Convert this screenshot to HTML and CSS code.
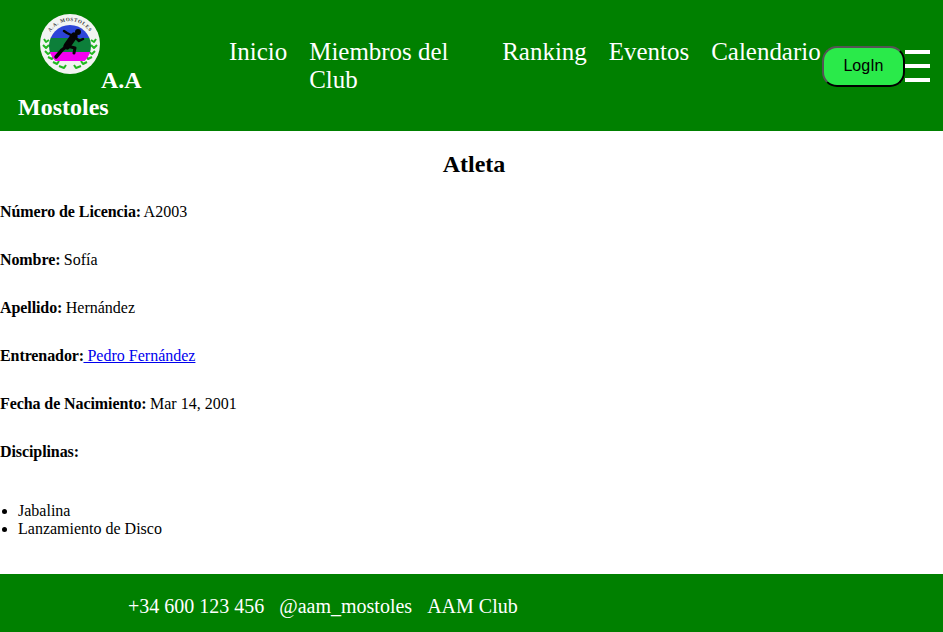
FILE: index.html
```html
<!DOCTYPE html>
<html lang="es">
  <head>
    <meta charset="UTF-8" />
    <meta name="viewport" content="width=device-width, initial-scale=1.0" />
    <title>Atleta</title>
    <link rel="stylesheet" href="styles.css">
  </head>
  <body>
    <header class="topbar">
      <a class="brand" href="#">
        <svg class="brand-logo" viewBox="0 0 60 60" width="60" height="60" aria-hidden="true">
          <circle cx="30" cy="30" r="30" fill="#f2f4f2" />
          <g fill="none" stroke="#22b822" stroke-width="2" stroke-linejoin="round">
            <path d="M4 25l2 3 3-2M3 31l3 3 3-3M5 37l3 3 3-2M8 43l4 2 2-3M13 48l4 2 2-3M19 52l5 2 2-3" />
            <path d="M56 25l-2 3-3-2M57 31l-3 3-3-3M55 37l-3 3-3-2M52 43l-4 2-2-3M47 48l-4 2-2-3M41 52l-5 2-2-3" />
          </g>
          <clipPath id="disc"><circle cx="30" cy="32" r="21" /></clipPath>
          <g clip-path="url(#disc)">
            <rect x="0" y="11" width="60" height="13" fill="#2d45d8" />
            <rect x="0" y="24" width="60" height="14" fill="#0c7f3a" />
            <rect x="0" y="38" width="60" height="9" fill="#f400f0" />
          </g>
          <g fill="none" stroke="#050505" stroke-linecap="round" stroke-linejoin="round">
            <path d="M34 22l-7 10" stroke-width="7" />
            <path d="M27 32l-5 4-6 7" stroke-width="3.5" />
            <path d="M27 32l8 2-1 5" stroke-width="3" />
            <path d="M33 22l-6-3-3-2" stroke-width="2.5" />
            <path d="M35 23l4 4 4-2" stroke-width="2.5" />
          </g>
          <circle cx="38" cy="18" r="3" fill="#050505" />
          <path id="rim" d="M7 30a23 23 0 0 1 46 0" fill="none" />
          <text class="brand-rim"><textPath href="#rim" startOffset="50%" text-anchor="middle">A.A. MOSTOLES</textPath></text>
        </svg>A.A Mostoles
      </a>
      <nav class="menu">
        <a class="menu-link" href="#">Inicio</a>
        <a class="menu-link menu-link-wide" href="#">Miembros del Club</a>
        <a class="menu-link" href="#">Ranking</a>
        <a class="menu-link" href="#">Eventos</a>
        <a class="menu-link" href="#">Calendario</a>
      </nav>
      <button class="login" type="button">LogIn</button>
      <div class="burger">
        <span class="burger-bar"></span>
        <span class="burger-bar"></span>
        <span class="burger-bar"></span>
      </div>
    </header>
    <main class="content">
      <h1 class="title">Atleta</h1>
      <p class="field"><strong>Número de Licencia:</strong> A2003</p>
      <p class="field"><strong>Nombre:</strong> Sofía</p>
      <p class="field"><strong>Apellido:</strong> Hernández</p>
      <p class="field"><strong>Entrenador:</strong><a href="#"> Pedro Fernández</a></p>
      <p class="field"><strong>Fecha de Nacimiento:</strong> Mar 14, 2001</p>
      <p class="field field-last"><strong>Disciplinas:</strong></p>
      <ul class="disciplines">
        <li>Jabalina</li>
        <li>Lanzamiento de Disco</li>
      </ul>
    </main>
    <footer class="bottombar">
      <span>+34 600 123 456</span>
      <span>@aam_mostoles</span>
      <span>AAM Club</span>
    </footer>
  </body>
</html>
```

FILE: styles.css
```css
* {
  box-sizing: border-box;
}

body {
  margin: 0;
  font-family: "Liberation Serif", "Times New Roman", serif;
  font-size: 16px;
  color: black;
  background-color: white;
}

.topbar {
  height: 131px;
  display: flex;
  align-items: flex-start;
  background-color: green;
}

.brand {
  width: 229px;
  flex-shrink: 0;
  padding: 14px 80px 0 18px;
  color: white;
  font-size: 24px;
  font-weight: bold;
  line-height: 27px;
  text-decoration: none;
}

.brand-logo {
  margin: 0 1px 14px 22px;
}

.brand-rim {
  font-size: 5px;
  font-family: "Liberation Serif", serif;
  font-weight: bold;
  fill: #333;
  letter-spacing: 0.6px;
}

.menu {
  width: 593px;
  flex-shrink: 0;
  display: flex;
  gap: 22px;
  padding-top: 38px;
}

.menu-link {
  color: white;
  font-size: 24.96px;
  line-height: 28px;
  text-decoration: none;
  white-space: nowrap;
}

.menu-link-wide {
  width: 171px;
  white-space: normal;
}

.login {
  width: 83px;
  height: 41px;
  margin-top: 46px;
  flex-shrink: 0;
  background-color: #2aea4a;
  border: 2px outset black;
  border-radius: 15px;
  color: black;
  font-family: "Liberation Sans", Arial, sans-serif;
  font-size: 16px;
  padding: 0 0 2px;
}

.burger {
  width: 25px;
  margin-top: 50px;
  display: flex;
  flex-direction: column;
  gap: 10px;
}

.burger-bar {
  height: 4px;
  background-color: white;
}

.content {
  height: 443px;
  overflow: hidden;
}

.title {
  margin: 19px 0 0;
  padding-left: 5px;
  font-size: 24px;
  line-height: 28px;
  text-align: center;
}

.field {
  margin: 0 0 30px;
  line-height: 18px;
}

.field strong {
  margin-right: -0.6px;
  letter-spacing: -0.09px;
}

.title + .field {
  margin-top: 25px;
}

.field-last {
  margin-bottom: 41px;
}

.disciplines {
  margin: 0;
  padding-left: 18px;
  line-height: 18px;
}

.bottombar {
  height: 58px;
  display: flex;
  align-items: center;
  gap: 15px;
  padding: 6px 0 0 128px;
  background-color: green;
  color: white;
  font-size: 20px;
}
```
